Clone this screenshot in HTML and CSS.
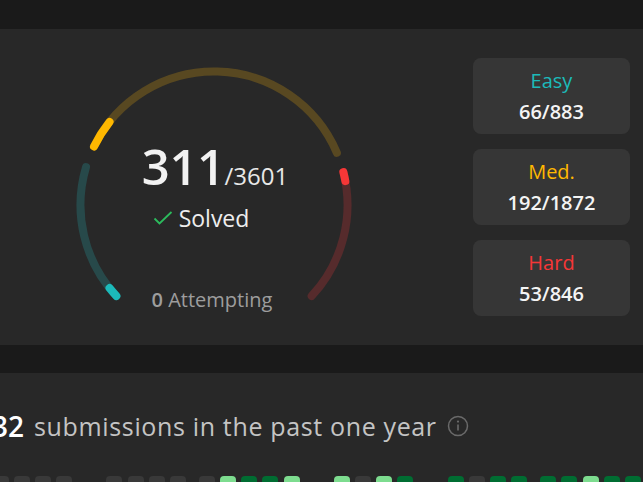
FILE: index.html
```html
<!DOCTYPE html>
<html lang="en">
<head>
<meta charset="utf-8">
<title>Progress</title>
<link rel="stylesheet" href="styles.css">
</head>
<body>
<section class="card progress">
  <div class="gauge">
    <svg class="ring" width="300" height="260" viewBox="0 0 300 260">
      <g fill="none" stroke-width="8" stroke-linecap="round">
        <path d="M52.36 238.05 A133.5 133.5 0 0 1 22.0 109.09" stroke="#27494a"/>
        <path d="M30.01 88.48 A133.5 133.5 0 0 1 272.89 94.84" stroke="#584821"/>
        <path d="M279.36 114.02 A133.5 133.5 0 0 1 247.64 238.05" stroke="#562b2c"/>
        <path d="M52.36 238.05 A133.5 133.5 0 0 1 45.52 230.10" stroke="#1cbaba"/>
        <path d="M30.01 88.48 A133.5 133.5 0 0 1 45.52 63.90" stroke="#ffb800"/>
        <path d="M279.36 114.02 A133.5 133.5 0 0 1 281.35 123.13" stroke="#f63737"/>
      </g>
    </svg>
    <div class="gauge-text">
      <div class="count"><span class="count-num">311</span><span class="count-total">/3601</span></div>
      <div class="solved"><svg class="check" width="20" height="14" viewBox="0 0 20 14"><path d="M1.5 7.5 L6.5 12.5 L18.5 1" fill="none" stroke="#2cbb5d" stroke-width="1.8"/></svg><span>Solved</span></div>
      <div class="attempting"><b>0</b> Attempting</div>
    </div>
  </div>
  <div class="stats">
    <div class="stat"><div class="stat-label easy">Easy</div><div class="stat-value">66/883</div></div>
    <div class="stat"><div class="stat-label medium">Med.</div><div class="stat-value">192/1872</div></div>
    <div class="stat"><div class="stat-label hard">Hard</div><div class="stat-value">53/846</div></div>
  </div>
</section>
<section class="card submissions">
  <div class="sub-title">
    <span class="sub-count">32</span>
    <span class="sub-text">submissions in the past one year</span>
    <svg class="info" width="22" height="22" viewBox="0 0 22 22"><circle cx="11" cy="11" r="9.5" fill="none" stroke="#6a6a6a" stroke-width="1.5"/><circle cx="11" cy="6.6" r="1.1" fill="#6a6a6a"/><path d="M11 9.5 V15.5" stroke="#6a6a6a" stroke-width="1.6"/></svg>
  </div>
  <div class="heatmap">
    <div class="month"><i class="c0"></i><i class="c0"></i><i class="c0"></i><i class="c0"></i><i class="empty"></i></div>
    <div class="month"><i class="c0"></i><i class="c0"></i><i class="c0"></i><i class="c0"></i></div>
    <div class="month"><i class="c0"></i><i class="c1"></i><i class="c2"></i><i class="c2"></i><i class="c1"></i><i class="empty"></i></div>
    <div class="month"><i class="c1"></i><i class="c0"></i><i class="c1"></i><i class="c2"></i><i class="empty"></i></div>
    <div class="month"><i class="c2"></i><i class="c0"></i><i class="c2"></i><i class="c2"></i></div>
    <div class="month"><i class="c2"></i><i class="c2"></i><i class="c1"></i><i class="c2"></i><i class="c2"></i></div>
  </div>
</section>
</body>
</html>
```

FILE: styles.css
```css
html, body {
  margin: 0;
  padding: 0;
}
body {
  background: #1a1a1a;
  font-family: "Open Sans", "Noto Sans", sans-serif;
  color: #eeeeee;
  height: 482px;
  overflow: hidden;
}
.card {
  background: #282828;
}
.progress {
  margin-top: 29px;
  height: 316px;
  box-sizing: border-box;
  display: flex;
  justify-content: space-between;
  padding: 29px 13px 0 64px;
}
.gauge {
  display: grid;
  width: 300px;
  height: 260px;
}
.gauge > * {
  grid-area: 1 / 1;
}
.gauge-text {
  display: flex;
  flex-direction: column;
  align-items: center;
}
.count {
  margin-top: 84px;
  margin-left: 2px;
  line-height: 1;
  color: #f2f2f2;
  white-space: nowrap;
}
.count-num {
  font-size: 49px;
  font-weight: 600;
  letter-spacing: -0.5px;
}
.count-total {
  font-size: 24px;
  color: #e8e8e8;
}
.solved {
  display: flex;
  align-items: center;
  gap: 6px;
  margin-top: 12px;
  margin-right: 26px;
  font-size: 23px;
  line-height: 30px;
  color: #eeeeee;
}
.check {
  display: block;
}
.attempting {
  margin-top: 54px;
  margin-right: 4px;
  font-size: 20px;
  line-height: 26px;
  color: #9d9d9d;
}
.attempting b {
  font-weight: 600;
}
.stats {
  display: flex;
  flex-direction: column;
  gap: 15px;
  width: 157px;
}
.stat {
  height: 76px;
  box-sizing: border-box;
  background: #363636;
  border-radius: 8px;
  display: flex;
  flex-direction: column;
  align-items: center;
  justify-content: center;
  gap: 5px;
  padding-top: 1px;
}
.stat-label {
  font-size: 20px;
  font-weight: 500;
  line-height: 26px;
}
.easy { color: #1cbaba; }
.medium { color: #ffb800; }
.hard { color: #f63737; }
.stat-value {
  font-size: 20px;
  font-weight: 600;
  line-height: 26px;
  color: #f4f4f4;
}
.submissions {
  margin-top: 28px;
  height: 200px;
  padding-top: 35px;
  box-sizing: border-box;
}
.sub-title {
  display: flex;
  align-items: center;
  margin-left: -8px;
  gap: 10px;
  height: 36px;
}
.sub-count {
  font-size: 28px;
  font-weight: 600;
  color: #ffffff;
}
.sub-text {
  font-size: 25px;
  letter-spacing: 0.65px;
  color: #c4c4c4;
}
.info {
  display: block;
  margin-left: 0;
}
.heatmap {
  display: flex;
  gap: 13px;
  margin-top: 32px;
  margin-left: -7.4px;
}
.month {
  display: flex;
  gap: 5.2px;
}
.month i {
  display: block;
  width: 16px;
  height: 16px;
  border-radius: 4px;
}
.c0 { background: #393939; }
.c1 { background: #7ddc8f; }
.c2 { background: #006d32; }
.empty { background: transparent; }
```
